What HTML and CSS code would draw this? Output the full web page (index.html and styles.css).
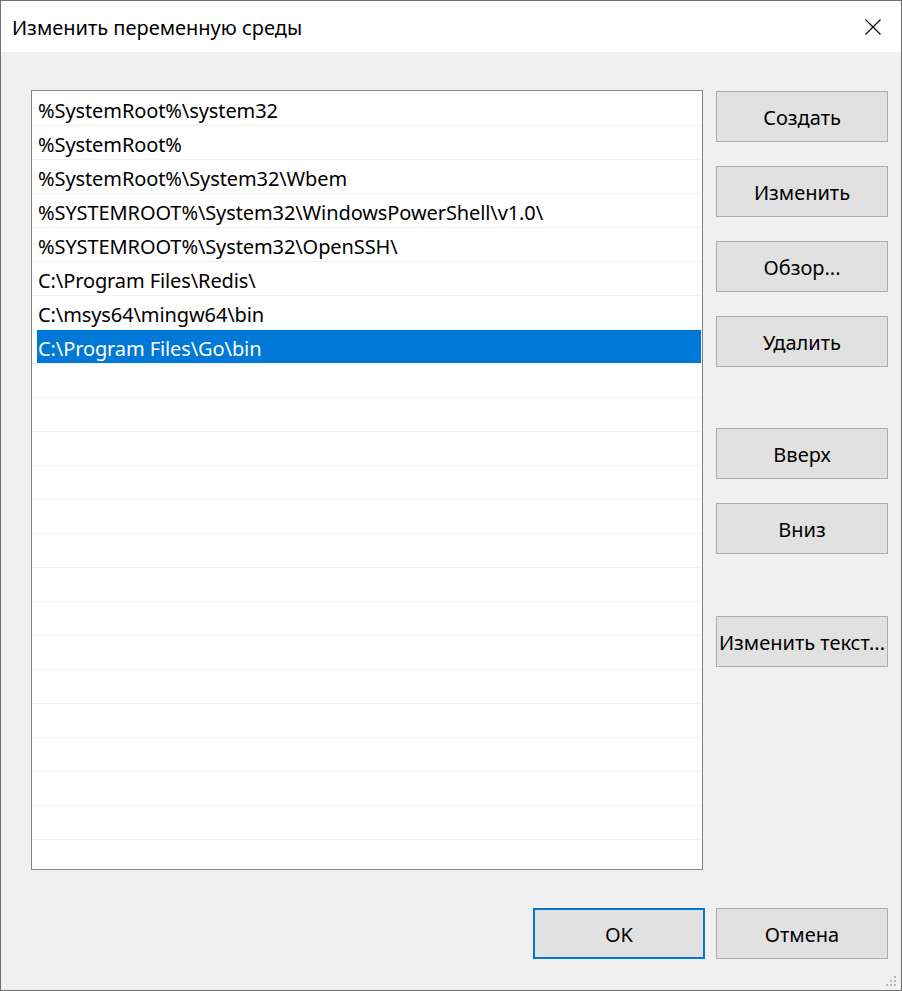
FILE: index.html
```html
<!DOCTYPE html>
<html lang="ru">
<head>
    <meta charset="UTF-8">
    <meta name="viewport" content="width=device-width, initial-scale=1.0">
    <title>Изменить переменную среды</title>
    <link rel="stylesheet" href="styles.css">
</head>
<body>
    <div class="dialog">
        <div class="titlebar">
            <span class="title">Изменить переменную среды</span>
            <span class="close">
                <svg width="16" height="16" viewBox="0 0 16 16"><path d="M0.5 0.5 L15.5 15.5 M15.5 0.5 L0.5 15.5" stroke="#000" stroke-width="1.1" fill="none"/></svg>
            </span>
        </div>
        <div class="content">
            <div class="main">
                <div class="list">
                    <div class="row"><span class="cell">%SystemRoot%\system32</span></div>
                    <div class="row"><span class="cell">%SystemRoot%</span></div>
                    <div class="row"><span class="cell">%SystemRoot%\System32\Wbem</span></div>
                    <div class="row"><span class="cell">%SYSTEMROOT%\System32\WindowsPowerShell\v1.0\</span></div>
                    <div class="row"><span class="cell">%SYSTEMROOT%\System32\OpenSSH\</span></div>
                    <div class="row"><span class="cell">C:\Program Files\Redis\</span></div>
                    <div class="row"><span class="cell">C:\msys64\mingw64\bin</span></div>
                    <div class="row"><span class="cell selected">C:\Program Files\Go\bin</span></div>
                    <div class="row"></div>
                    <div class="row"></div>
                    <div class="row"></div>
                    <div class="row"></div>
                    <div class="row"></div>
                    <div class="row"></div>
                    <div class="row"></div>
                    <div class="row"></div>
                    <div class="row"></div>
                    <div class="row"></div>
                    <div class="row"></div>
                    <div class="row"></div>
                    <div class="row"></div>
                    <div class="row"></div>
                    <div class="row"></div>
                </div>
                <div class="side">
                    <div class="group">
                        <button class="btn">Создать</button>
                        <button class="btn">Изменить</button>
                        <button class="btn">Обзор...</button>
                        <button class="btn">Удалить</button>
                    </div>
                    <div class="group move">
                        <button class="btn">Вверх</button>
                        <button class="btn">Вниз</button>
                    </div>
                    <div class="group text">
                        <button class="btn">Изменить текст...</button>
                    </div>
                </div>
            </div>
            <div class="footer">
                <button class="btn default">OK</button>
                <button class="btn">Отмена</button>
            </div>
        </div>
        <svg class="grip" width="10" height="10" viewBox="0 0 10 10">
            <rect x="8" y="0" width="2" height="2" fill="#b8b8b8"/>
            <rect x="4" y="4" width="2" height="2" fill="#b8b8b8"/>
            <rect x="8" y="4" width="2" height="2" fill="#b8b8b8"/>
            <rect x="0" y="8" width="2" height="2" fill="#b8b8b8"/>
            <rect x="4" y="8" width="2" height="2" fill="#b8b8b8"/>
            <rect x="8" y="8" width="2" height="2" fill="#b8b8b8"/>
        </svg>
    </div>
</body>
</html>
```

FILE: styles.css
```css
html, body { margin: 0; padding: 0; background: #f0f0f0; }
body { font-family: "Segoe UI", "Noto Sans", sans-serif; font-size: 20px; color: #000; }

.dialog { position: relative; width: 902px; height: 991px; box-sizing: border-box; border: 1px solid #6f6f6f; background: #f0f0f0; }

.titlebar { height: 51px; box-sizing: border-box; padding: 2px 20px 0 11px; background: #fff; display: flex; align-items: center; justify-content: space-between; }
.title { font-size: 20px; }
.close { display: flex; width: 16px; height: 16px; margin-top: -2px; }

.content { padding: 38px 13px 31px 30px; }
.main { display: flex; gap: 13px; height: 780px; }

.list { width: 672px; box-sizing: border-box; border: 1px solid #828282; background: #fff; padding-top: 1px; overflow: hidden; }
.row { height: 33px; border-bottom: 1px solid #f0f0f0; }
.cell { display: block; height: 31px; padding-top: 2px; line-height: 33px; margin: 0 1px 0 5px; padding-left: 1px; white-space: nowrap; letter-spacing: -0.1px; }
.cell.selected { background: #0078d7; color: #fff; }

.side { width: 172px; padding-top: 1px; }
.group { display: flex; flex-direction: column; gap: 24px; }
.group.move { margin-top: 61px; }
.group.text { margin-top: 62px; }

.btn { width: 172px; height: 51px; box-sizing: border-box; border: 1px solid #adadad; background: #e1e1e1; font-family: inherit; font-size: 20px; color: #000; padding: 2px 0 0; white-space: nowrap; }
.btn.default { border: 2px solid #0078d7; }

.footer { display: flex; justify-content: flex-end; gap: 11px; margin-top: 38px; }

.grip { position: absolute; right: 5px; bottom: 4px; }
```
